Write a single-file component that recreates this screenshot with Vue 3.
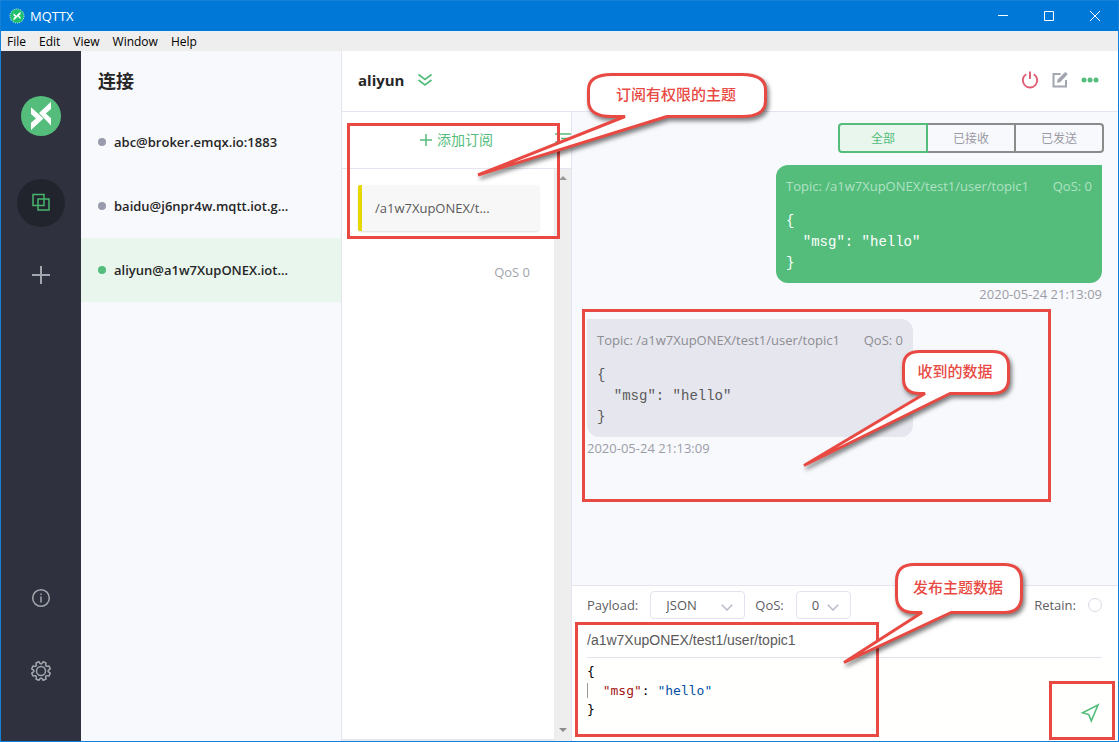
<script setup>
import { ref } from 'vue'

const menus = ['File', 'Edit', 'View', 'Window', 'Help']
const connections = [
  { name: 'abc@broker.emqx.io:1883', online: false },
  { name: 'baidu@j6npr4w.mqtt.iot.g...', online: false },
  { name: 'aliyun@a1w7XupONEX.iot...', online: true }
]
const filters = ['全部', '已接收', '已发送']
const activeFilter = ref('全部')
const messages = [
  { kind: 'sent', topic: '/a1w7XupONEX/test1/user/topic1', time: '2020-05-24 21:13:09' },
  { kind: 'received', topic: '/a1w7XupONEX/test1/user/topic1', time: '2020-05-24 21:13:09' }
]
const body = '{\n  "msg": "hello"\n}'
const payload = ref('JSON')
const qos = ref('0')
const topic = ref('/a1w7XupONEX/test1/user/topic1')
const retain = ref(false)

// Outline of the settings cog: eight teeth, each with a notch at its side
const cog = Array.from({ length: 8 }, (_, i) => i * 45)
  .flatMap((a) => [[a - 5, 7.2], [a + 5, 7.2], [a + 13, 9.5], [a + 32, 9.5]])
  .map(([deg, r]) => {
    const t = (deg * Math.PI) / 180
    return `${(10 + r * Math.sin(t)).toFixed(2)},${(10 - r * Math.cos(t)).toFixed(2)}`
  })
  .join(' ')
</script>

<template>
  <div class="window">
    <header class="titlebar">
      <svg class="app-icon" viewBox="0 0 16 16" aria-hidden="true">
        <circle cx="8" cy="8" r="7" fill="#1fc06c" stroke="#d9f5e6" stroke-width="1" stroke-dasharray="1 1" />
        <path d="M4.500 5.200L8.800 8.800 4.500 12.400V10L6 8.700 4.500 7.300zM11.500 3.800V6.200L9.900 7.700l1.600 1.400V11.300L7.500 7.300z" fill="#fff" />
      </svg>
      <span class="app-name">MQTTX</span>
      <button class="win-btn" aria-label="Minimize">
        <svg viewBox="0 0 10 10"><path d="M0 4.500h10" /></svg>
      </button>
      <button class="win-btn" aria-label="Maximize">
        <svg viewBox="0 0 10 10"><path d="M.5.5h9v9h-9z" /></svg>
      </button>
      <button class="win-btn" aria-label="Close">
        <svg viewBox="0 0 10 10"><path d="M0 0l10 10M10 0L0 10" /></svg>
      </button>
    </header>

    <nav class="menubar">
      <button v-for="m in menus" :key="m">{{ m }}</button>
    </nav>

    <div class="workspace">
      <aside class="rail">
        <svg class="logo" viewBox="0 0 40 40" aria-hidden="true">
          <circle cx="20" cy="20" r="20" fill="#54bd7b" />
          <path d="M10 11.300L22.500 22.500 10 34V26.800L15 22.500 10 18zM30 5.700V13L24.800 17.500 30 22.300V29.500L18 17z" fill="#fff" />
        </svg>
        <button class="rail-btn current" aria-label="Connections">
          <svg viewBox="0 0 20 20"><path d="M2 1.500h11v11h-11zM7 6h11v11H7z" /></svg>
        </button>
        <button class="rail-btn plus" aria-label="New connection">
          <svg viewBox="0 0 20 20"><path d="M10 1v18M1 10h18" /></svg>
        </button>
        <button class="rail-btn push" aria-label="About">
          <svg viewBox="0 0 20 20"><circle cx="10" cy="10" r="8.300" /><path d="M10 8.500v6M10 5.500v1.500" /></svg>
        </button>
        <button class="rail-btn gear" aria-label="Settings">
          <svg viewBox="0 0 20 20">
            <circle cx="10" cy="10" r="4.500" />
            <polygon :points="cog" stroke-linejoin="round" />
          </svg>
        </button>
      </aside>

      <section class="connections">
        <h1>连接</h1>
        <ul>
          <li v-for="c in connections" :key="c.name" :class="{ online: c.online }">
            <i class="dot"></i><span>{{ c.name }}</span>
          </li>
        </ul>
      </section>

      <main class="client">
        <header class="client-head">
          <h2>aliyun</h2>
          <button class="icon-btn" aria-label="Show details">
            <svg width="16" height="14" viewBox="0 0 16 14" fill="none" stroke="#54bd7b" stroke-width="1.700"><path d="M1.500 1.500L8 6.500l6.500-5M1.500 7L8 12 14.500 7" /></svg>
          </button>
          <div class="actions">
            <button class="icon-btn" aria-label="Disconnect">
              <svg width="18" height="18" viewBox="0 0 18 18" fill="none" stroke="#e05b72" stroke-width="1.900"><path d="M5.200 3.200a7.200 7.200 0 1 0 7.600 0M9 .5v7.500" /></svg>
            </button>
            <button class="icon-btn" aria-label="Edit">
              <svg width="16" height="16" viewBox="0 0 16 16"><path d="M8.500 2H1.500v12.500h12.500V8" fill="none" stroke="#a2a6b1" stroke-width="2" /><path d="M5 11l.6-3.600L12.600.5Q13.500-.2 14.600.8 16 2 15 3.100L8.400 10z" fill="#a2a6b1" /></svg>
            </button>
            <button class="icon-btn" aria-label="More">
              <svg width="18" height="6" viewBox="0 0 18 6" fill="#54bd7b"><circle cx="3" cy="3" r="2.500" /><circle cx="9" cy="3" r="2.500" /><circle cx="15" cy="3" r="2.500" /></svg>
            </button>
          </div>
        </header>

        <div class="client-body">
          <section class="subs">
            <div class="subs-head">
              <button class="add">
                <svg width="12" height="12" viewBox="0 0 12 12" fill="none" stroke="#54bd7b" stroke-width="1.500"><path d="M6 0v12M0 6h12" /></svg>
                添加订阅
              </button>
              <button class="icon-btn list" aria-label="Collapse">
                <svg width="16" height="14" viewBox="0 0 16 14" fill="none" stroke="#54bd7b" stroke-width="1.500"><path d="M0 1h16M6 5.500h10M0 9h16M6 13h10" /></svg>
              </button>
            </div>
            <div class="subs-body">
              <div class="subs-list">
                <div class="sub-card">/a1w7XupONEX/t...</div>
                <div class="sub-qos">QoS 0</div>
              </div>
              <div class="track" aria-hidden="true">
                <svg width="8" height="4" viewBox="0 0 8 4"><path d="M0 4l4-4 4 4z" fill="#999" /></svg>
                <svg width="8" height="4" viewBox="0 0 8 4"><path d="M0 0l4 4 4-4z" fill="#8c8c8c" /></svg>
              </div>
            </div>
          </section>

          <section class="chat">
            <div class="filters">
              <button v-for="f in filters" :key="f" :class="{ on: f === activeFilter }" @click="activeFilter = f">{{ f }}</button>
            </div>
            <div class="messages">
              <article v-for="m in messages" :key="m.kind" :class="m.kind">
                <div class="bubble">
                  <p class="meta"><span>Topic: {{ m.topic }}</span><span>QoS: 0</span></p>
                  <pre>{{ body }}</pre>
                </div>
                <time>{{ m.time }}</time>
              </article>
            </div>

            <form class="composer" @submit.prevent>
              <div class="options">
                <label for="payload">Payload:</label>
                <div class="select payload">
                  <select id="payload" v-model="payload"><option>JSON</option><option>Plaintext</option></select>
                  <svg width="12" height="7" viewBox="0 0 12 7"><path d="M.8.8L6 6 11.200.8" /></svg>
                </div>
                <label for="qos">QoS:</label>
                <div class="select qos">
                  <select id="qos" v-model="qos"><option>0</option><option>1</option><option>2</option></select>
                  <svg width="12" height="7" viewBox="0 0 12 7"><path d="M.8.8L6 6 11.200.8" /></svg>
                </div>
                <label for="retain" class="retain">Retain:</label>
                <input id="retain" v-model="retain" type="radio" :value="true" />
              </div>
              <input v-model="topic" class="topic" type="text" aria-label="Topic" />
              <div class="editor">
                <pre contenteditable="true" role="textbox" aria-multiline="true" aria-label="Message" spellcheck="false"><span class="row">{</span>
<span class="row guide">  <b class="key">"msg"</b>: <b class="str">"hello"</b></span>
<span class="row">}</span></pre>
                <button class="icon-btn" aria-label="Send">
                  <svg width="20" height="20" viewBox="0 0 20 20" fill="none" stroke="#54bd7b" stroke-width="1.600"><path d="M18 2L2.500 9.700l6.300 1.900 2.500 6.200z" /></svg>
                </button>
              </div>
            </form>
          </section>
        </div>
      </main>
    </div>

    <svg class="notes" width="1119" height="742" viewBox="0 0 1119 742">
      <g fill="none" stroke="#e84a43" stroke-width="3">
        <rect x="348.500" y="124.500" width="210" height="113" />
        <rect x="583.500" y="310.500" width="466" height="190" />
        <rect x="576.500" y="623.500" width="301" height="112" />
        <rect x="1050.500" y="682.500" width="63" height="56" />
      </g>
      <g class="callouts">
        <path d="M612 74.500H742Q765.500 74.500 765.500 90V101Q765.500 116.500 742 116.500H667L478 175 625 116.500H612Q588.500 116.500 588.500 101V90Q588.500 74.500 612 74.500Z" />
        <path d="M920 351.500H992Q1008.500 351.500 1008.500 366V379Q1008.500 393.500 992 393.500H950L804 465.500 925 393.500H920Q903.500 393.500 903.500 379V366Q903.500 351.500 920 351.500Z" />
        <path d="M914 564.500H1004Q1021.500 564.500 1021.500 581V596Q1021.500 612.500 1004 612.500H951L844 662.500 922 612.500H914Q896.500 612.500 896.500 596V581Q896.500 564.500 914 564.500Z" />
      </g>
      <g class="note-text">
        <text x="676" y="100">订阅有权限的主题</text>
        <text x="955" y="377">收到的数据</text>
        <text x="958" y="593">发布主题数据</text>
      </g>
    </svg>
  </div>
</template>

<style>
body { margin: 0; }
</style>

<style scoped>
* { box-sizing: border-box; }
.window {
  position: relative;
  display: flex;
  flex-direction: column;
  min-height: 100vh;
  border: 1px solid #1480d8;
  background: #fff;
  color: #262626;
  font: 13px/22px "Open Sans", "Noto Sans CJK SC", sans-serif;
}
button { padding: 0; border: 0; background: none; color: inherit; font: inherit; }
h1, h2, ul, p, pre { margin: 0; padding: 0; }
svg { display: block; }

.titlebar { display: flex; align-items: center; height: 30px; padding-left: 8px; background: #0078d7; color: #fff; }
.app-icon { width: 16px; height: 16px; }
.app-name { flex: 1; margin-left: 5px; font-size: 13px; }
.win-btn { display: grid; place-items: center; width: 46px; height: 30px; }
.win-btn svg { width: 10px; height: 10px; fill: none; stroke: #fff; }
.menubar { display: flex; gap: 13px; height: 20px; padding-left: 6px; background: #eee; color: #000; font-size: 12px; line-height: 22px; }
.workspace { display: flex; flex: 1; }

.rail { display: flex; flex-direction: column; align-items: center; flex: 0 0 80px; padding: 45px 0 60px; background: #30313e; }
.logo { width: 40px; height: 40px; }
.rail-btn { display: grid; place-items: center; }
.rail-btn svg { width: 20px; height: 20px; fill: none; stroke: #a0a8ae; stroke-width: 1.5; }
.rail-btn.current { width: 48px; height: 48px; margin-top: 43px; border-radius: 50%; background: #22242d; }
.rail-btn.current svg { stroke: #45b56c; }
.rail-btn.plus { margin-top: 38px; }
.rail-btn.plus svg { stroke-width: 2; }
.rail-btn.push { margin-top: auto; }
.rail-btn.gear { margin-top: 53px; }

.connections { flex: 0 0 260px; background: #f8f9fd; }
h1 { height: 59px; padding-left: 17px; font-size: 18px; line-height: 60px; }
ul { list-style: none; }
li { display: flex; align-items: center; gap: 8px; height: 64px; padding-left: 17px; font-weight: 600; }
li.online { background: #e9f6ee; }
.dot { width: 8px; height: 8px; border-radius: 50%; background: #9a9bac; }
.online .dot { background: #54bd7b; }

.client { display: flex; flex: 1; flex-direction: column; min-width: 0; border-left: 1px solid #e4e5ee; }
.client-head { display: flex; align-items: center; gap: 13px; height: 61px; padding: 0 19px 2px 16px; border-bottom: 1px solid #e4e5ee; }
h2 { font-size: 15px; font-weight: 700; }
.actions { display: flex; align-items: center; gap: 13px; margin-left: auto; }
.client-body { display: flex; flex: 1; }

.subs { display: flex; flex: 0 0 230px; flex-direction: column; min-width: 0; border-right: 1px solid #e4e5ee; }
.subs-head { display: flex; height: 57px; border-bottom: 1px solid #e4e5ee; overflow: hidden; }
.add { display: flex; flex: 1; align-items: center; justify-content: center; gap: 5px; height: 55px; padding-left: 16px; color: #54bd7b; font-size: 14px; }
.list { align-self: flex-start; margin-top: 21px; }
.subs-body { display: flex; flex: 1; }
.subs-list { flex: 1; padding: 16px 15px 0 16px; border-bottom: 2px solid #e6e7ec; }
.sub-card { height: 46px; padding-left: 13px; border-left: 4px solid #e4d800; border-radius: 2px; background: #f7f7f7; box-shadow: 0 1px 2px #ddd; color: #5a5a5a; line-height: 46px; }
.sub-qos { margin-top: 30px; padding-right: 9px; color: #a2a4ad; text-align: right; }
.track { display: flex; flex-direction: column; align-items: center; justify-content: space-between; width: 17px; padding: 7px 0 9px; background: #eee; }

.chat { display: flex; flex: 1; flex-direction: column; min-width: 0; background: #f8f9fd; }
.filters { display: flex; align-self: flex-end; margin: 11px 14px 12px; }
.filters button { width: 90px; height: 30px; padding-top: 1px; margin-left: -2px; border: 2px solid #8b8b8b; color: #9a9ba4; font-size: 12px; }
.filters button:first-child { border-radius: 4px 0 0 4px; }
.filters button:last-child { border-radius: 0 4px 4px 0; }
.filters .on { position: relative; border-color: #54bd7b; background: #e9f6ee; color: #54bd7b; }
.messages { display: flex; flex: 1; flex-direction: column; gap: 14px; padding: 0 16px 0 15px; }
article { display: flex; flex-direction: column; }
.sent { align-items: flex-end; }
.received { align-items: flex-start; }
.bubble { min-width: 326px; padding: 10px 10px 9px; border-radius: 0 12px 12px 12px; background: #e6e6ee; color: #5a5a5a; }
.sent .bubble { border-radius: 12px 0 12px 12px; background: #54bd7b; color: #fff; }
.meta { display: flex; justify-content: space-between; gap: 16px; color: #8d8d92; }
.sent .meta { color: #b0e2c3; }
.bubble pre { margin-top: 14px; font: 14px/21px "Liberation Mono", monospace; }
time { color: #9b9da6; }

.composer { border-top: 1px solid #e4e5ee; background: #fff; color: #5f6064; }
.options { display: flex; align-items: center; height: 38px; padding: 0 16px 0 15px; }
.select { display: grid; align-items: center; height: 28px; border: 1px solid #e2e3ee; border-radius: 4px; }
.select select, .select svg { grid-area: 1 / 1; }
.select select { width: 100%; height: 26px; padding: 0 0 0 15px; border: 0; background: none; color: #5a5a5a; font: inherit; appearance: none; }
.select svg { justify-self: end; margin: 4px 11px 0 0; fill: none; stroke: #b9bbc6; stroke-width: 1.5; pointer-events: none; }
.payload { width: 95px; margin: 0 10px 0 12px; }
.qos { width: 55px; margin-left: 12px; }
.retain { margin: 0 12px 0 auto; }
#retain { width: 14px; height: 14px; margin: 0; border: 1px solid #d9dae6; border-radius: 50%; background: #fff; appearance: none; }
.topic { display: block; width: calc(100% - 31px); height: 34px; margin: 0 16px 0 15px; padding: 0 0 2px; border: 0; border-bottom: 1px solid #e2e3ea; border-radius: 0; background: none; color: #5a5a5a; font: 14px "Liberation Sans", sans-serif; }
.editor { display: flex; height: 83px; padding: 4px 18px 18px 15px; background: #fffffe; }
.editor pre { flex: 1; color: #000; font: 13px/19px "DejaVu Sans Mono", monospace; outline: 0; }
.editor b { font-weight: 400; }
.guide { box-shadow: inset 1px 0 #999; }
.key { color: #a31515; }
.str { color: #0451a5; }
.editor .icon-btn { align-self: flex-end; }

.notes { position: absolute; top: -1px; left: -1px; pointer-events: none; }
.callouts { fill: #fff; stroke: #e84a43; stroke-width: 3; stroke-linejoin: bevel; filter: drop-shadow(2px 3px 2px rgba(0, 0, 0, 0.5)); }
.note-text { fill: #e84a43; font: 500 15px "Noto Sans CJK SC", sans-serif; text-anchor: middle; }
</style>
